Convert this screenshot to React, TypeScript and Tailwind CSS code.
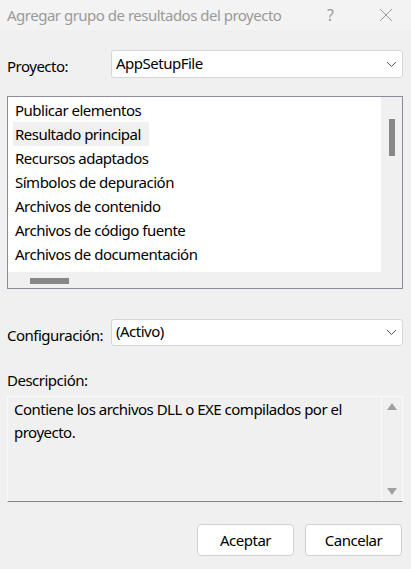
import React from "react";

const ITEMS = [
  "Publicar elementos",
  "Resultado principal",
  "Recursos adaptados",
  "Símbolos de depuración",
  "Archivos de contenido",
  "Archivos de código fuente",
  "Archivos de documentación",
];

function Chevron() {
  return (
    <svg width="11" height="7" viewBox="0 0 11 7" className="shrink-0">
      <path d="M1 1l4.5 4.5L10 1" fill="none" stroke="#555" strokeWidth="1" />
    </svg>
  );
}

function Combo({ value, className, textClass = "" }: { value: string; className: string; textClass?: string }) {
  return (
    <div
      className={`flex flex-1 items-center justify-between rounded-[3px] border border-[#d5d5d5] bg-white pr-[5px] pl-[4px] ${className}`}
    >
      <span className={`text-[15px] text-black ${textClass}`}>{value}</span>
      <Chevron />
    </div>
  );
}

export default function App() {
  return (
    <div
      className="flex h-[569px] w-[411px] flex-col bg-[#f0f0f0] text-[15px] tracking-[-0.5px] text-black"
      style={{ fontFamily: '"Noto Sans", "Open Sans", sans-serif' }}
    >
      {/* title bar */}
      <div className="flex h-[30px] items-center bg-[#f3f3f3] pl-[7px] text-[#9a9a9a]">
        <span className="flex-1 text-[15px]">Agregar grupo de resultados del proyecto</span>
        <span className="w-[42px] text-[16px]">?</span>
        <svg width="14" height="14" viewBox="0 0 14 14" className="mr-[18px] ml-[10px]">
          <path d="M1 1l12 12M13 1L1 13" stroke="#9a9a9a" strokeWidth="1" />
        </svg>
      </div>

      <div className="flex flex-col px-[7px] pr-[8px]">
        <div className="mt-[20px] flex items-center">
          <span className="w-[104px] pt-[4px]">Proyecto:</span>
          <Combo value="AppSetupFile" className="h-[28px]" textClass="-mt-[2px]" />
        </div>

        {/* list box */}
        <div className="mt-[18px] flex h-[193px] flex-col border border-[#8b8b99] bg-[#f0f0f0]">
          <div className="flex flex-1">
            <div className="flex h-[175px] flex-1 flex-col bg-white pt-[1px] pl-[5px]">
              {ITEMS.map((item, i) => (
                <div
                  key={item}
                  className={`flex h-[24px] items-center px-[2px] ${i === 1 ? "w-fit bg-[#f0f0f0] pr-[8px]" : ""}`}
                >
                  {item}
                </div>
              ))}
            </div>
            <div className="flex w-[21px] justify-center pt-[22px]">
              <div className="h-[37px] w-[6px] bg-[#878787]" />
            </div>
          </div>
          <div className="flex h-[17px] items-center pl-[22px]">
            <div className="mb-[-2px] h-[6px] w-[39px] bg-[#878787]" />
          </div>
        </div>

        <div className="mt-[30px] flex items-center">
          <span className="w-[104px] pt-[5px]">Configuración:</span>
          <Combo value="(Activo)" className="h-[27px]" textClass="-mt-[3px]" />
        </div>

        <div className="mt-[22px]">Descripción:</div>

        {/* description box */}
        <div className="mt-[5px] flex h-[106px] border border-b-[#858585] border-[#fafafa] bg-[#f0f0f0]">
          <div className="flex-1 pt-[1px] pl-[6px] leading-[23px]">
            Contiene los archivos DLL o EXE compilados por el proyecto.
          </div>
          <div className="flex w-[21px] flex-col items-center justify-between border-l border-[#fafafa] pt-[6px] pb-[6px]">
            <svg width="10" height="7" viewBox="0 0 10 7">
              <path d="M5 0L10 7H0z" fill="#a0a0a0" />
            </svg>
            <svg width="10" height="7" viewBox="0 0 10 7">
              <path d="M0 0h10L5 7z" fill="#a0a0a0" />
            </svg>
          </div>
        </div>

        <div className="mt-[22px] flex justify-end gap-[11px] pr-[1px]">
          <button className="h-[32px] w-[97px] rounded-[4px] border border-[#d0d0d0] bg-white text-[15px]">
            Aceptar
          </button>
          <button className="h-[32px] w-[97px] rounded-[4px] border border-[#d0d0d0] bg-white text-[15px]">
            Cancelar
          </button>
        </div>
      </div>
    </div>
  );
}
